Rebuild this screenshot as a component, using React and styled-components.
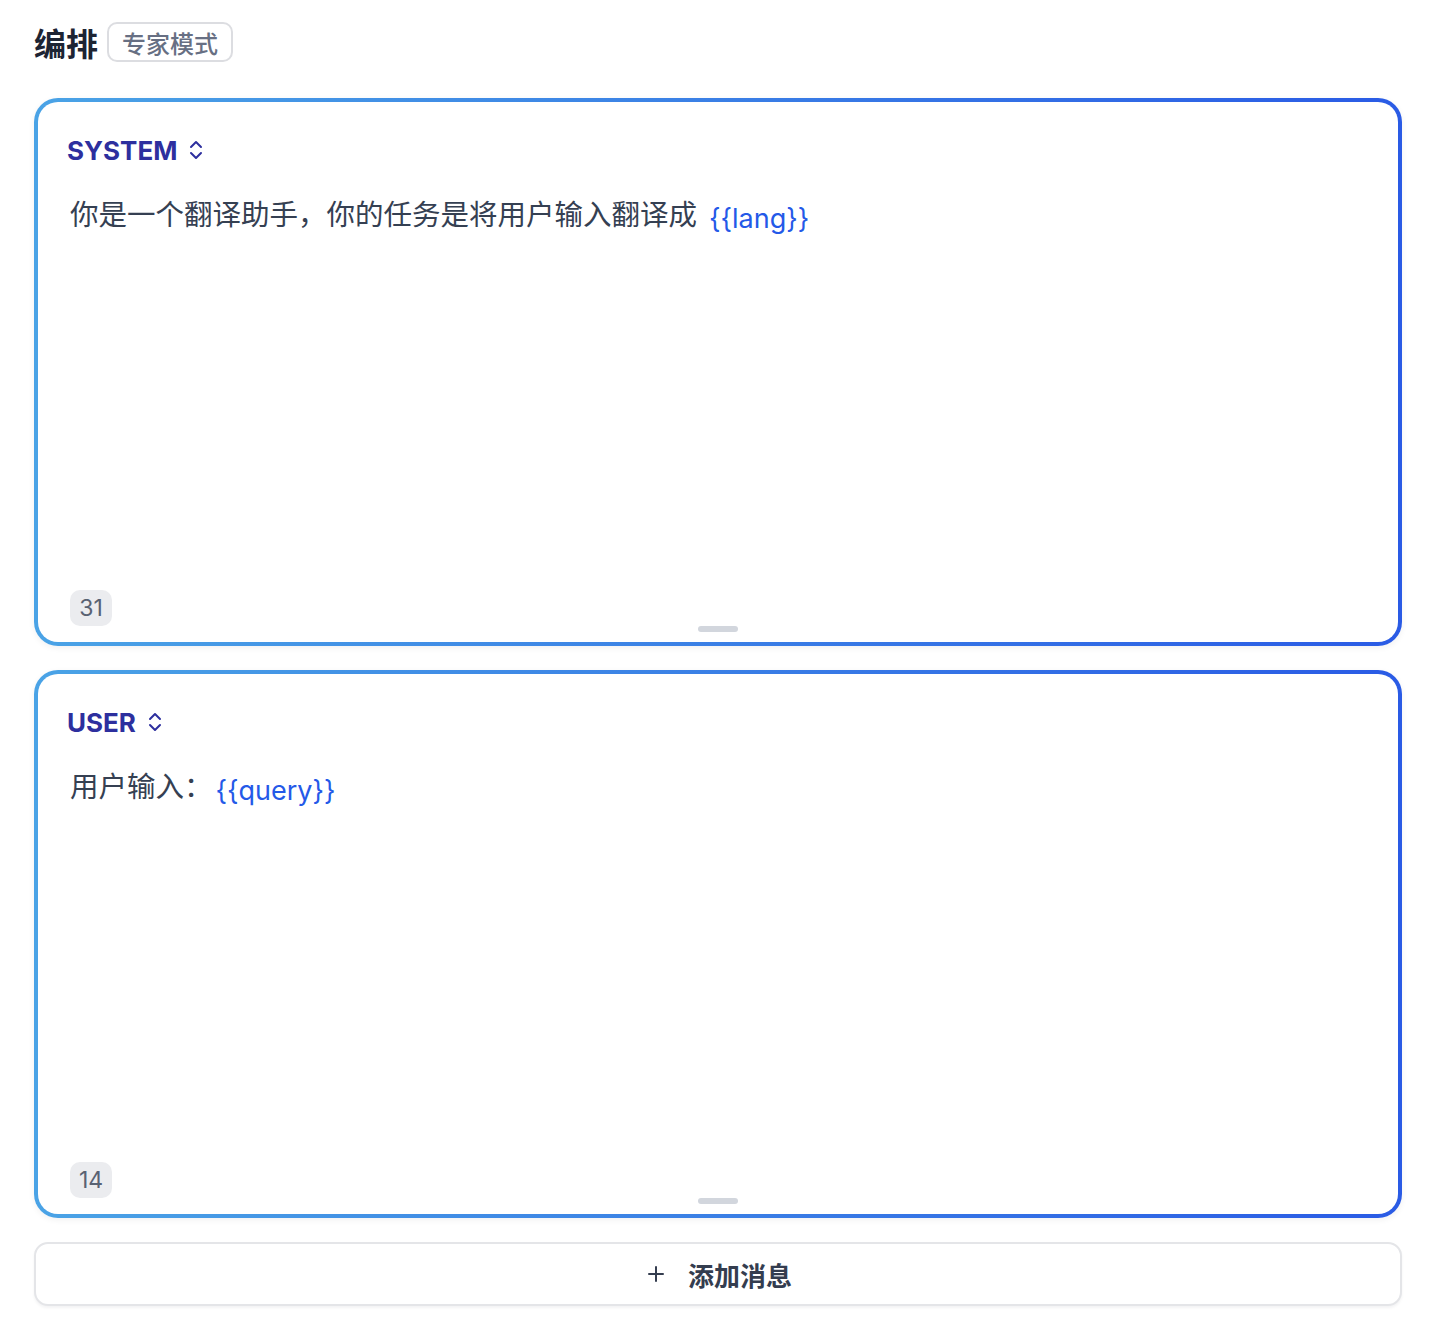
import React from "react";
import styled, { createGlobalStyle } from "styled-components";
import { ChevronsUpDown, Plus } from "lucide-react";

const Global = createGlobalStyle`
  body {
    margin: 0;
    background: #fff;
    font-family: Inter, "Noto Sans CJK SC", "Noto Sans", sans-serif;
  }
`;

const Page = styled.div`
  padding: 22px 34px 14px 34px;
  display: flex;
  flex-direction: column;
`;

const Header = styled.div`
  display: flex;
  align-items: center;
  gap: 9px;
  margin-bottom: 36px;
`;

const Title = styled.h1`
  margin: 0;
  font-family: "Noto Sans CJK SC", sans-serif;
  font-size: 32px;
  font-weight: 700;
  color: #1d2433;
  line-height: 40px;
`;

const ModeBadge = styled.span`
  display: inline-flex;
  align-items: center;
  height: 36px;
  padding: 0 13px;
  border: 2px solid #dcdde1;
  border-radius: 10px;
  font-family: "Noto Sans CJK SC", sans-serif;
  font-size: 24px;
  font-weight: 500;
  color: #676f83;
`;

const Cards = styled.div`
  display: flex;
  flex-direction: column;
  gap: 24px;
`;

const Card = styled.div`
  position: relative;
  height: 548px;
  box-sizing: border-box;
  border: 4px solid transparent;
  border-radius: 24px;
  background:
    linear-gradient(#fff, #fff) padding-box,
    linear-gradient(90deg, #4aa3e6, #2a5be5) border-box;
  box-shadow: 0 2px 6px rgba(16, 24, 40, 0.06);
  padding: 28px 30px 16px 29px;
  display: flex;
  flex-direction: column;
`;

const Role = styled.div`
  display: flex;
  align-items: center;
  gap: 7px;
  height: 40px;
  font-size: 26px;
  font-weight: 700;
  color: #2d2f9e;
`;

const Body = styled.div`
  margin-top: 24px;
  padding-left: 3px;
  flex: 1;
  font-family: "Noto Sans CJK SC", sans-serif;
  font-size: 28.5px;
  line-height: 38px;
  color: #354052;
`;

const Variable = styled.span`
  font-family: Inter, "Noto Sans", sans-serif;
  color: #2459e8;
  font-size: 27px;
  margin-left: ${(p) => p.$gap ?? 12}px;
  position: relative;
  top: 3px;
`;

const Count = styled.span`
  align-self: flex-start;
  margin-left: 3px;
  display: inline-flex;
  align-items: center;
  justify-content: center;
  min-width: 42px;
  height: 36px;
  padding: 0 6px;
  box-sizing: border-box;
  border-radius: 10px;
  background: #ebecef;
  font-size: 23px;
  color: #596273;
`;

const Handle = styled.span`
  position: absolute;
  left: 50%;
  bottom: 10px;
  transform: translateX(-50%);
  width: 40px;
  height: 6px;
  border-radius: 3px;
  background: #d2d6dd;
`;

const AddButton = styled.button`
  margin-top: 24px;
  height: 64px;
  display: flex;
  align-items: center;
  justify-content: center;
  gap: 20px;
  background: #fff;
  border: 2px solid #e4e5e8;
  border-radius: 14px;
  box-shadow: 0 2px 3px rgba(16, 24, 40, 0.05);
  font-family: "Noto Sans CJK SC", sans-serif;
  font-size: 26px;
  font-weight: 700;
  color: #343d4f;
  cursor: pointer;
`;

function MessageCard({ role, children, count }) {
  return (
    <Card>
      <Role>
        {role}
        <ChevronsUpDown size={24} strokeWidth={2} />
      </Role>
      <Body>{children}</Body>
      <Count>{count}</Count>
      <Handle />
    </Card>
  );
}

export default function App() {
  return (
    <>
      <Global />
      <Page>
        <Header>
          <Title>编排</Title>
          <ModeBadge>专家模式</ModeBadge>
        </Header>
        <Cards>
          <MessageCard role="SYSTEM" count={31}>
            你是一个翻译助手，你的任务是将用户输入翻译成
            <Variable>{"{{lang}}"}</Variable>
          </MessageCard>
          <MessageCard role="USER" count={14}>
            用户输入：<Variable $gap={3}>{"{{query}}"}</Variable>
          </MessageCard>
        </Cards>
        <AddButton>
          <Plus size={24} strokeWidth={2} />
          添加消息
        </AddButton>
      </Page>
    </>
  );
}
